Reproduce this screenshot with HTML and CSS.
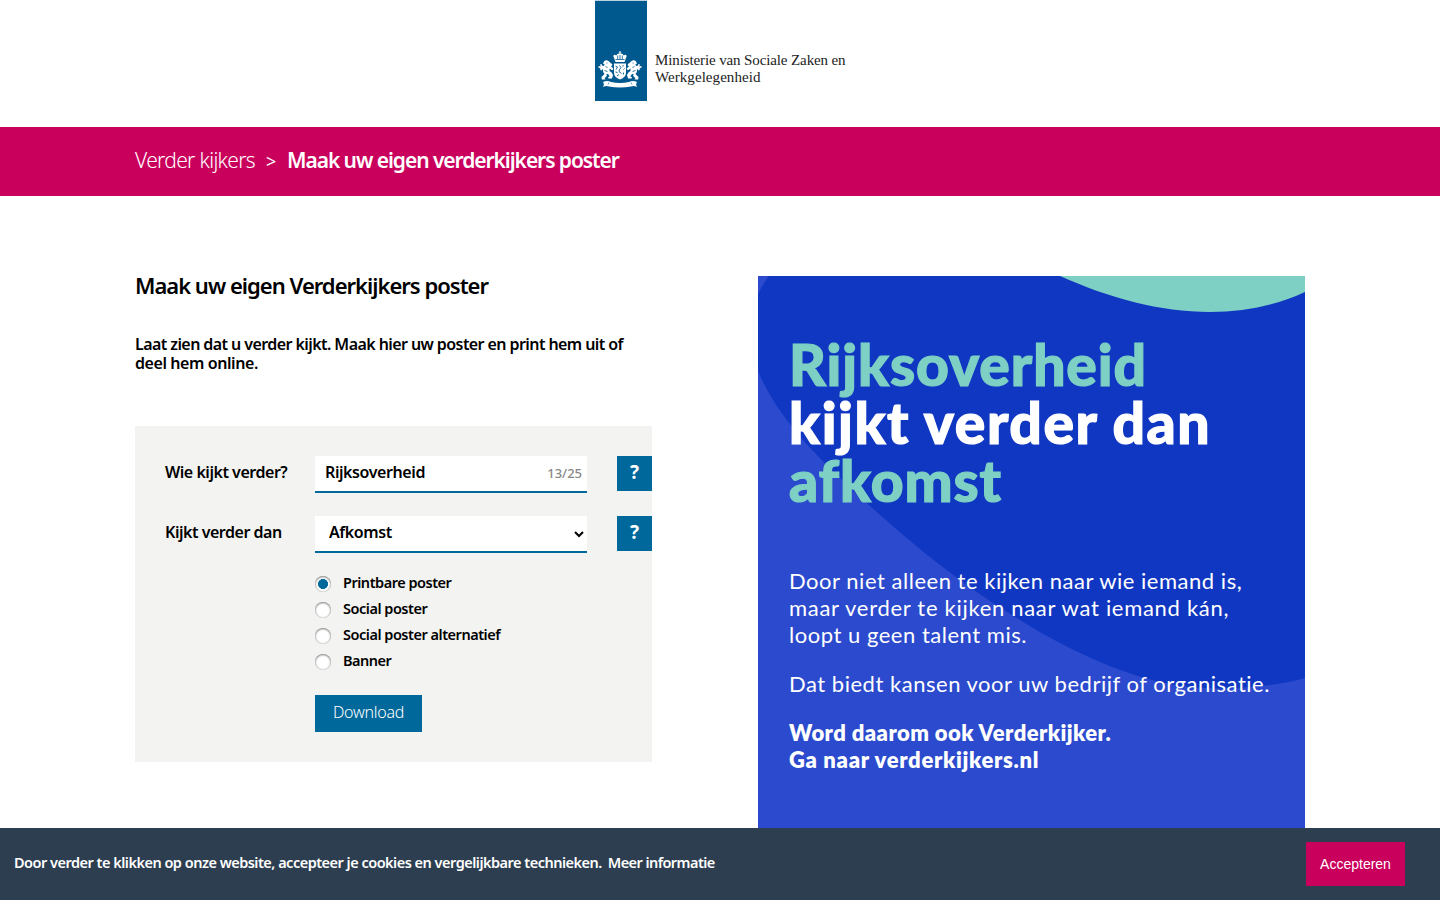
FILE: index.html
```html
<!DOCTYPE html>
<html lang="nl">
<head>
<meta charset="utf-8">
<title>Maak uw eigen Verderkijkers poster</title>
<link rel="stylesheet" href="styles.css">
</head>
<body>
<header class="site-header">
  <div class="logo">
    <div class="ribbon">
      <svg class="emblem" viewBox="0 0 44 38" fill="#fff" stroke="none">
        <path d="M22 0V3M20.800 1.300H23.200" stroke="#fff" stroke-width=".8"/>
        <path d="M15.300 5q.8-2 2.900-.500q1-2.500 3.800-2q2.800-.5 3.800 2q2.100-1.500 2.900.5l-2.200 6h-9z"/>
        <path d="M17.500 8.500h9M19.700 4.500v3.500M24.300 4.500v3.500M22 4v4" stroke="#00598e" stroke-width=".8"/>
        <path d="M16 12.500h12v9q0 5-6 7q-6-2-6-7z"/>
        <path d="M17.500 15l2 1-1.500 2.500M25 14v1.500M26.500 17.500l-1 1M17.500 21l2 .5M21.500 14.500q3 2 0 4q-2 2 2 4M19 25l2-1.500M25.500 21.500v2" fill="none" stroke="#00598e" stroke-width=".9"/>
        <path id="lion" d="M6 10.500q2-2 4.500-.5l2 2q1.500.5 2 2l-1.500 1.200q1.500 1 2.500 2.800l-1.500 1.200-2.500-1.700v2.500q2.500 1 3.500 4l-1 3.500h-3.500l-.5-1.200 1.800-1-2.300-2.300q-1 3-3 4l1 1.500H3.800l-.3-2.500 3-3q-2-2-1.500-5l-1.700 1.500q-1.500-.5-1-2L.5 16.500V15l2.200.5L2 13.500l1.500-.5q0 2 2.200 2l1-1.500-1.700-1z"/>
        <use href="#lion" transform="matrix(-1 0 0 1 44 0)"/>
        <path d="M9 11.500v1M7.500 15.500l2 1M6.500 19.500l3 1M8.500 23.500h2M35 11.500v1M36.500 15.500l-2 1M37.500 19.500l-3 1M35.500 23.500h-2" stroke="#00598e" stroke-width=".8"/>
        <path d="M5 31q4-2 8 0q9 2 18 0q4-2 8 0l-1 2.300 1 2.700q-3-1.800-6-.5q-11 2-22 0q-3-1.300-6 .5l1-2.700z"/>
        <path d="M11 31.500l-1 2M33 31.500l1 2" fill="none" stroke="#00598e" stroke-width=".6"/>
      </svg>
    </div>
    <p class="ministry">Ministerie van Sociale Zaken en<br><span class="ministry-end">Werkgelegenheid</span></p>
  </div>
</header>
<nav class="crumbs">
  <a class="crumb-link">Verder kijkers</a><span class="crumb-sep">&gt;</span><strong class="crumb-now">Maak uw eigen verderkijkers poster</strong>
</nav>
<main class="content">
  <section class="maker">
    <h1 class="title">Maak uw eigen Verderkijkers poster</h1>
    <p class="intro">Laat zien dat u verder kijkt. Maak hier uw poster en print hem uit of<br><span class="intro-end">deel hem online.</span></p>
    <form class="form">
      <div class="row">
        <label class="label">Wie kijkt verder?</label>
        <div class="field"><span>Rijksoverheid</span><span class="count">13/25</span></div>
        <button type="button" class="help">?</button>
      </div>
      <div class="row">
        <label class="label">Kijkt verder dan</label>
        <select class="field select"><option>Afkomst</option></select>
        <button type="button" class="help">?</button>
      </div>
      <div class="options">
        <label class="option"><i class="radio on"></i><span>Printbare poster</span></label>
        <label class="option"><i class="radio"></i><span>Social poster</span></label>
        <label class="option"><i class="radio"></i><span>Social poster alternatief</span></label>
        <label class="option"><i class="radio"></i><span>Banner</span></label>
      </div>
      <button type="button" class="download">Download</button>
    </form>
  </section>
  <section class="poster">
    <svg class="poster-bg" viewBox="0 0 547 624">
      <path fill="#1037c1" d="M11 0Q5 8 0 18V95C15 131 43 164 73 193C102 222 132 248 163 274C193 298 223 320 254 339C293 364 334 385 374 398C401 407 428 412 453 412C486 413 518 410 547 402V0z"/>
      <path fill="#7ed0c4" d="M302 0C351 22 402 36 452 36C487 36 519 29 547 16V0z"/>
    </svg>
    <div class="poster-text">
      <h2 class="slogan"><em>Rijksoverheid</em><span>kijkt verder dan</span><em>afkomst</em></h2>
      <p>Door niet alleen te kijken naar wie iemand is,<br><span class="wide">maar verder te kijken naar wat iemand kán,</span><br>loopt u geen talent mis.</p>
      <p>Dat biedt kansen voor uw bedrijf of organisatie.</p>
      <p class="call">Word daarom ook Verderkijker.<br><span class="wide">Ga naar verderkijkers.nl</span></p>
    </div>
  </section>
</main>
<footer class="cookies">
  <p class="cookie-text"><span>Door verder te klikken op onze website, accepteer je cookies en vergelijkbare technieken.</span><a>Meer informatie</a></p>
  <button type="button" class="accept">Accepteren</button>
</footer>
</body>
</html>
```
FILE: styles.css
```css
* { box-sizing: border-box; }
body { margin: 0; height: 900px; overflow: hidden; background: #fff; color: #000; font-family: "Noto Sans", sans-serif; }
h1, h2, p { margin: 0; }
button { border: 0; padding: 0; font-family: inherit; color: #fff; }

.site-header { height: 127px; display: flex; justify-content: center; }
.logo { width: 250px; display: flex; gap: 8px; align-items: flex-start; }
.ribbon { width: 52px; height: 101px; flex: none; padding: 50px 3px 0; background: #00598e; border: solid #bcd2e0; border-width: 1px 0 0; }
.emblem { display: block; width: 44px; height: 38px; }
.ministry { padding-top: 52px; font: 15px/17px "Liberation Serif", serif; letter-spacing: -.116px; color: #222; white-space: nowrap; }
.ministry-end { letter-spacing: .06px; }

.crumbs { height: 69px; padding: 0 135px; display: flex; align-items: baseline; background: #ca005d; color: #fff; font-size: 21px; line-height: 66px; white-space: nowrap; }
.crumb-link { font-weight: 300; letter-spacing: -.67px; }
.crumb-sep { width: 32px; text-align: center; font-size: 18px; }
.crumb-now { font-weight: 600; letter-spacing: -1.06px; }

.content { padding: 80px 135px 0; display: flex; justify-content: space-between; align-items: flex-start; white-space: nowrap; }
.maker { width: 517px; }
.title { height: 59px; font-size: 22px; line-height: 19px; font-weight: 600; letter-spacing: -.994px; }
.intro { height: 91px; font-size: 16px; line-height: 19px; font-weight: 600; letter-spacing: -.577px; }
.intro-end { letter-spacing: -.42px; }
.form { height: 336px; padding: 30px 0 0 30px; background: #f3f3f1; font-weight: 600; }
.row { display: flex; height: 60px; align-items: flex-start; }
.label { width: 150px; font-size: 16px; line-height: 32px; letter-spacing: -.47px; }
.field { width: 272px; height: 37px; margin-right: 30px; padding: 0 5px 0 10px; display: flex; justify-content: space-between; background: #fff; border: 0; border-bottom: 2px solid #01689b; font-size: 16px; line-height: 32px; letter-spacing: -.41px; }
.select { padding: 0 0 3px 10px; border-radius: 0; font-family: inherit; font-weight: 600; color: #000; line-height: normal; }
.count { color: #888; font-size: 13px; font-weight: 500; line-height: 35px; letter-spacing: 0; }
.help { width: 35px; height: 35px; padding-bottom: 4px; background: #01689b; font-size: 19px; font-weight: 700; }
.options { margin-top: -5px; padding-left: 150px; height: 124px; }
.option { display: flex; align-items: center; height: 26px; gap: 12px; font-size: 14.500px; line-height: 20px; letter-spacing: -.48px; }
.option span { padding-bottom: 4px; }
.radio { width: 16px; height: 16px; border-radius: 50%; background: #fff; box-shadow: inset 0 1px 2px #888, inset 0 0 2px #aaa; }
.radio.on { background: radial-gradient(circle, #01689b 0 4.700px, #fff 5.300px); }
.download { display: block; width: 107px; height: 37px; margin-left: 150px; padding-bottom: 3px; background: #01689b; font-size: 16px; font-weight: 300; letter-spacing: -.26px; }

.poster { position: relative; width: 547px; height: 624px; background: #2b4acd; color: #fff; }
.poster-bg { position: absolute; inset: 0; width: 547px; height: 624px; }
.poster-text { position: relative; padding: 60px 0 0 31px; font: 22px/27px Lato, sans-serif; letter-spacing: .52px; font-variant-ligatures: none; }
.poster-text p { margin-bottom: 22px; }
.slogan { display: flex; flex-direction: column; height: 231px; font-size: 57px; line-height: 58px; font-weight: 900; letter-spacing: .9px; -webkit-text-stroke: 1.200px currentColor; }
.slogan em { font-style: normal; color: #7ed0c4; }
.slogan span { letter-spacing: 1.550px; }
.slogan em, .slogan span { position: relative; top: -1px; }
.wide { letter-spacing: .7px; }
.poster-text .call { font-weight: 800; letter-spacing: .41px; }
.call .wide { letter-spacing: .67px; }

.cookies { position: fixed; left: 0; right: 0; bottom: 0; height: 72px; padding: 0 35px 0 14px; display: flex; justify-content: space-between; align-items: center; background: #2d3e50; color: #fff; }
.cookie-text { display: flex; gap: 6px; padding-bottom: 4px; font-size: 14.500px; font-weight: 600; letter-spacing: -.505px; white-space: nowrap; }
.cookie-text a { letter-spacing: -.56px; }
.accept { width: 99px; height: 44px; background: #ca005d; font: 14px "Liberation Sans", sans-serif; }
```
